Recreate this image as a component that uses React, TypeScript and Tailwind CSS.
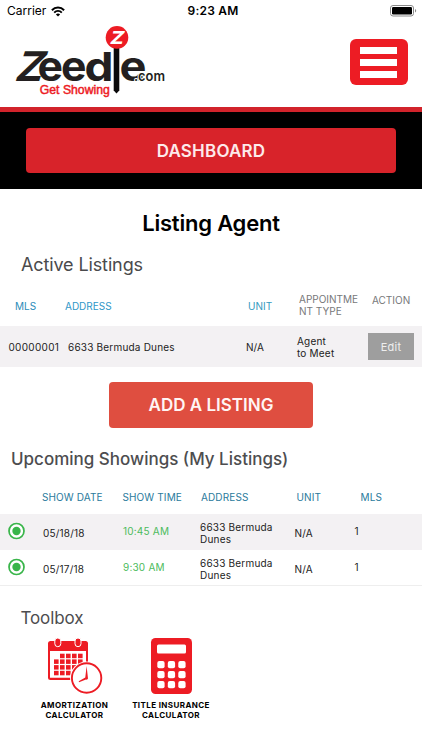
import React from "react";

const RED = "#ed1c24";

function StatusBar() {
  return (
    <div className="flex h-[22px] items-center justify-between pl-[7px] pr-[5px] text-black">
      <div className="flex w-[151px] items-center gap-[5px]">
        <span className="text-[12px]">Carrier</span>
        <svg width="14" height="11" viewBox="0 0 14 11" fill="none" stroke="#000" strokeWidth="2">
          <path d="M0.9 4.2C4.3 0.7 9.7 0.7 13.1 4.2" />
          <path d="M3.2 6.6C5.4 4.5 8.6 4.5 10.8 6.6" />
          <path d="M7 10.5L4.9 8.4C6.1 7.3 7.9 7.3 9.1 8.4Z" fill="#000" stroke="none" />
        </svg>
      </div>
      <span className="text-[12px] font-semibold tracking-[0.2px]">9:23 AM</span>
      <div className="flex w-[149px] justify-end">
        <svg width="27" height="12" viewBox="0 0 27 12">
          <rect x="0.5" y="0.5" width="23" height="10.5" rx="2.5" fill="none" stroke="#8a8a8a" />
          <rect x="2" y="2" width="20" height="7.5" rx="1.2" fill="#000" />
          <path d="M25 4v3.6c1.6-.6 1.6-3 0-3.6z" fill="#888" />
        </svg>
      </div>
    </div>
  );
}

function Logo() {
  return (
    <svg className="block overflow-visible" width="155" height="76" viewBox="13 24 155 76" fontFamily="Inter, sans-serif">
      <g fill="#231f20" fontSize="41" fontWeight="700">
        <text transform="translate(13.500 80.700) skewX(-17)" textLength="28" lengthAdjust="spacingAndGlyphs">Z</text>
        <text x="37.500" y="80.700" textLength="25.500" lengthAdjust="spacingAndGlyphs">e</text>
        <text x="61" y="80.700" textLength="25.500" lengthAdjust="spacingAndGlyphs">e</text>
        <text x="84.500" y="80.700" fontSize="39.500" textLength="29" lengthAdjust="spacingAndGlyphs">d</text>
        <text x="119.500" y="80.700" textLength="27" lengthAdjust="spacingAndGlyphs">e</text>
      </g>
      <path d="M112.600 46h7.800v36h-7.800z" fill="#fff" />
      <path d="M113.700 46h5.600v44.500l-2.800 3-2.800-3z" fill="#0b0a0b" />
      <circle cx="117" cy="37.400" r="11.300" fill={RED} />
      <text transform="translate(109.300 43.800) skewX(-14)" fontSize="18" fontWeight="800" fill="#fff" textLength="13.500" lengthAdjust="spacingAndGlyphs">Z</text>
      <text x="134" y="81" fontSize="13.500" fontWeight="600" fill="#231f20" stroke="#fff" strokeWidth="2" paintOrder="stroke" textLength="31" lengthAdjust="spacingAndGlyphs">.com</text>
      <text x="39.800" y="93.600" fontFamily="Liberation Sans, sans-serif" fontSize="12.500" fill={RED} stroke={RED} strokeWidth="0.500" textLength="70" lengthAdjust="spacingAndGlyphs">Get Showing</text>
    </svg>
  );
}

function Header() {
  return (
    <header className="flex h-[90px] justify-between border-b-[5px] border-[#d2232b] pl-[13px] pr-[14.5px] pt-[2px]">
      <Logo />
      <button aria-label="Menu" className="mt-[15px] flex h-[46px] w-[58px] flex-col items-center justify-center gap-[5px] rounded-[6px] bg-[#ed1c24]">
        <span className="h-[7px] w-[37px] bg-white" />
        <span className="h-[7px] w-[37px] bg-white" />
        <span className="h-[7px] w-[37px] bg-white" />
      </button>
    </header>
  );
}

function CalendarIcon() {
  const cells = [0, 1, 2, 3, 4].flatMap((c) => [0, 1, 2, 3].map((r) => ({ c, r }))).filter(({ c, r }) => !(c === 0 && r === 0));
  return (
    <svg className="block" width="56" height="57" viewBox="47 637 56 57">
      <path d="M50.500 641H85.500Q88 641 88 643.500V677.500Q88 680 85.500 680H50.500Q48 680 48 677.500V643.500Q48 641 50.500 641Z" fill={RED} />
      <path d="M50 651H86V677.700H50Z" fill="#fff" />
      {cells.map(({ c, r }) => (
        <rect key={`${c}-${r}`} x={54 + c * 6} y={653.700 + r * 5.700} width="4.600" height="4.500" fill={RED} />
      ))}
      <rect x="54.800" y="638" width="6" height="8.700" rx="3" fill={RED} stroke="#fff" strokeWidth="1" />
      <rect x="75" y="638" width="6" height="8.700" rx="3" fill={RED} stroke="#fff" strokeWidth="1" />
      <circle cx="86.600" cy="678" r="16.600" fill="#fff" />
      <circle cx="86.600" cy="678" r="14.700" fill="#fff" stroke={RED} strokeWidth="1.900" />
      <path d="M86.600 666L88 678.500Q87.500 680 86 679.500L79 682.200L78.700 681.300L85.300 677.500Z" fill={RED} />
    </svg>
  );
}

function CalculatorIcon() {
  return (
    <svg className="block" width="42" height="57" viewBox="150 637 42 57">
      <rect x="151" y="638" width="41" height="56" rx="4.500" fill={RED} />
      <rect x="157" y="644.500" width="29" height="9" rx="1.500" fill="#fff" />
      {[0, 1, 2].flatMap((r) =>
        [0, 1, 2].map((c) => (
          <rect key={`${r}-${c}`} x={157.300 + c * 10.500} y={661 + r * 10} width="7.300" height="7.300" rx="2" fill="#fff" />
        )),
      )}
    </svg>
  );
}

function Target() {
  return (
    <svg className="block" width="17" height="18" viewBox="0 0 17 18">
      <circle cx="8.500" cy="9" r="7.500" fill="#fff" stroke="#39b54a" strokeWidth="1.700" />
      <circle cx="8.500" cy="9" r="4.200" fill="#39b54a" />
    </svg>
  );
}

const showings = [
  { date: "05/18/18", time: "10:45 AM", row: "bg-[#f3f1f3] h-[36px]" },
  { date: "05/17/18", time: "9:30 AM", row: "border-b border-[#eeeeee] h-[36px]" },
];

export default function App() {
  return (
    <div className="h-[750px] w-[422px] overflow-hidden bg-white font-['Inter',sans-serif] whitespace-nowrap">
      <StatusBar />
      <Header />
      <nav className="h-[76.500px] bg-black px-[26px] pt-[16px]">
        <button className="block h-[45px] w-full rounded-[4px] bg-[#d8232a] pt-[2px] text-[17px] font-semibold tracking-[0.2px] text-[#fdeaea]">DASHBOARD</button>
      </nav>
      <h1 className="mt-[19px] text-center text-[22px] font-semibold leading-[30px] tracking-[-0.2px] text-black">Listing Agent</h1>
      <h2 className="mt-[13px] pl-[21px] text-[18px] leading-[28px] tracking-[-0.12px] text-[#4a4a4c]">Active Listings</h2>

      <div className="flex h-[47.500px] pt-[14.500px] text-[10px] leading-[12px] tracking-[0px] text-[#77787a]">
        <span className="w-[65px] pl-[15px] pt-[7px] text-[#2a8cb9]">MLS</span>
        <span className="w-[183px] pt-[7px] text-[#2f97c8]">ADDRESS</span>
        <span className="w-[51px] pt-[7px] text-[#3399c0]">UNIT</span>
        <span className="w-[73px]">APPOINTME<br />NT TYPE</span>
        <span className="pt-[1px]">ACTION</span>
      </div>
      <div className="flex h-[41px] items-center bg-[#f3f1f3] text-[10px] leading-[12px] tracking-[0.2px] text-[#1c1c1c]">
        <span className="w-[68px] pl-[8.500px] tracking-[0.3px]">00000001</span>
        <span className="w-[178px]">6633 Bermuda Dunes</span>
        <span className="w-[51px] tracking-[0px]">N/A</span>
        <span className="w-[71px]">Agent<br />to Meet</span>
        <button className="h-[27px] w-[46px] bg-[#9e9e9e] text-[11px] text-[#eeeeee]">Edit</button>
      </div>

      <button className="mx-auto mt-[15px] block h-[45.500px] w-[203.500px] rounded-[4px] bg-[#df4e40] pt-[2px] text-[17px] font-semibold text-[#fff5f4]">ADD A LISTING</button>

      <h2 className="mt-[17.500px] pl-[11px] text-[17px] font-medium leading-[28px] text-[#4d4d4f]">Upcoming Showings (My Listings)</h2>
      <div className="flex h-[41px] pl-[42px] pt-[18px] text-[10px] leading-[12px] tracking-[0.12px] text-[#2a7a9c]">
        <span className="w-[80.500px]">SHOW DATE</span>
        <span className="w-[78.500px]">SHOW TIME</span>
        <span className="w-[95.500px]">ADDRESS</span>
        <span className="w-[64px]">UNIT</span>
        <span>MLS</span>
      </div>
      {showings.map((s) => (
        <div key={s.date} className={`flex text-[10px] leading-[12px] tracking-[0.2px] text-[#1c1c1c] ${s.row}`}>
          <span className="w-[43px] pl-[8px] pt-[8px]"><Target /></span>
          <span className="w-[80px] pt-[13px]">{s.date}</span>
          <span className="w-[77px] pt-[11px] text-[#4cbb5c]">{s.time}</span>
          <span className="w-[94.500px] pt-[7px]">6633 Bermuda<br />Dunes</span>
          <span className="w-[60px] pt-[13px]">N/A</span>
          <span className="pt-[11px]">1</span>
        </div>
      ))}

      <h2 className="mt-[18px] pl-[20.500px] text-[17px] leading-[28px] tracking-[-0.12px] text-[#4d4d4f]">Toolbox</h2>
      <div className="mt-[5px] flex pl-[34px] text-center text-[8px] font-bold leading-[9.500px] tracking-[0.4px] text-black">
        <div className="w-[81px]">
          <div className="pl-[13px]"><CalendarIcon /></div>
          <p className="mt-[7px]">AMORTIZATION<br />CALCULATOR</p>
        </div>
        <div className="ml-[11px] w-[90px]">
          <div className="pl-[24px]"><CalculatorIcon /></div>
          <p className="mt-[7px]">TITLE INSURANCE<br />CALCULATOR</p>
        </div>
      </div>
    </div>
  );
}
